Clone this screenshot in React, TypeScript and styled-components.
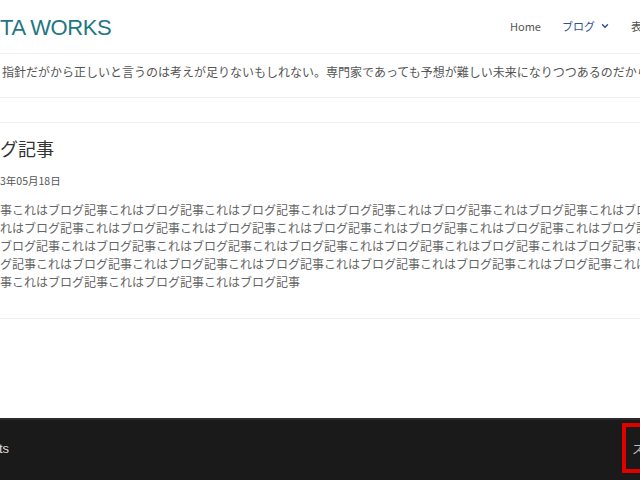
import React, { FC } from 'react'
import styled, { createGlobalStyle } from 'styled-components'
import { ChevronDown } from 'lucide-react'

const GlobalStyle = createGlobalStyle`
	html, body {
		margin: 0;
		padding: 0;
		background: #fff;
		overflow: hidden;
	}

	#root {
		width: 640px;
		height: 480px;
		overflow: hidden;
	}
`

const Page = styled.div`
	width: 662px;
	min-height: 480px;
	display: flex;
	flex-direction: column;
	font-family: 'Noto Sans CJK JP', 'Liberation Sans', sans-serif;
	color: #555;
`

const Header = styled.header`
	height: 53px;
	display: flex;
	align-items: center;
	border-bottom: 1px solid #eeeeee;
`

const Brand = styled.div`
	flex: 0 0 510px;
	font-family: 'Liberation Sans', Arial, sans-serif;
	font-size: 22px;
	letter-spacing: -0.4px;
	color: #1f7783;
	padding-top: 3px;
`

const Nav = styled.nav`
	display: flex;
	align-items: center;
	gap: 21px;
	white-space: nowrap;
	padding-bottom: 2px;
`

const NavItem = styled.span<{ $active?: boolean }>`
	display: flex;
	align-items: center;
	gap: 5px;
	font-size: 11px;
	color: ${(p) => (p.$active ? '#2f4f96' : '#555')};
`

const Tagline = styled.div`
	height: 44px;
	box-sizing: border-box;
	padding: 9px 0 0 2px;
	border-bottom: 1px solid #f0f0f0;
	font-size: 12px;
	line-height: 18px;
	white-space: nowrap;
	color: #555;
`

const Article = styled.article`
	margin-top: 24px;
	padding: 12px 0 27px;
	border-top: 1px solid #f0f0f0;
	border-bottom: 1px solid #f0f0f0;
`

const Title = styled.h1`
	margin: 0;
	font-size: 18px;
	font-weight: 400;
	line-height: 26px;
	color: #333;
`

const PostDate = styled.div`
	margin-top: 12px;
	font-size: 10.5px;
	line-height: 16px;
	color: #555;
`

const Body = styled.p`
	width: 700px;
	margin: 12px 0 0;
	font-size: 12px;
	line-height: 18px;
	color: #666;
	word-break: break-all;
`

const Spacer = styled.div`
	flex: 1;
`

const Footer = styled.footer`
	height: 62px;
	box-sizing: border-box;
	border-top: 2px solid #2a2a2a;
	background: #1a1a1a;
	display: flex;
	align-items: center;
	justify-content: space-between;
	font-family: 'Liberation Sans', Arial, sans-serif;
	font-size: 13px;
	color: #ddd;
`

const Copy = styled.span`
	margin-left: -1px;
	padding-bottom: 4px;
`

const TopButton = styled.div`
	width: 40px;
	height: 50px;
	box-sizing: border-box;
	border: 4px solid #e00000;
	display: flex;
	align-items: center;
	padding-left: 6px;
	margin-bottom: 4px;
	overflow: hidden;
	white-space: nowrap;
	font-family: 'Noto Sans CJK JP', sans-serif;
	font-size: 12px;
	color: #bbb;
`

const body = '事' + 'これはブログ記事'.repeat(32)

const App: FC = () => (
	<Page>
		<GlobalStyle />
		<Header>
			<Brand>TA WORKS</Brand>
			<Nav>
				<NavItem>Home</NavItem>
				<NavItem $active>
					ブログ
					<ChevronDown size={10} strokeWidth={3.5} />
				</NavItem>
				<NavItem>表示サンプル</NavItem>
			</Nav>
		</Header>
		<Tagline>
			指針だがから正しいと言うのは考えが足りないもしれない。専門家であっても予想が難しい未来になりつつあるのだから
		</Tagline>
		<Article>
			<Title>グ記事</Title>
			<PostDate>3年05月18日</PostDate>
			<Body>{body}</Body>
		</Article>
		<Spacer />
		<Footer>
			<Copy>ts</Copy>
			<TopButton>スクロール</TopButton>
		</Footer>
	</Page>
)

export default App
